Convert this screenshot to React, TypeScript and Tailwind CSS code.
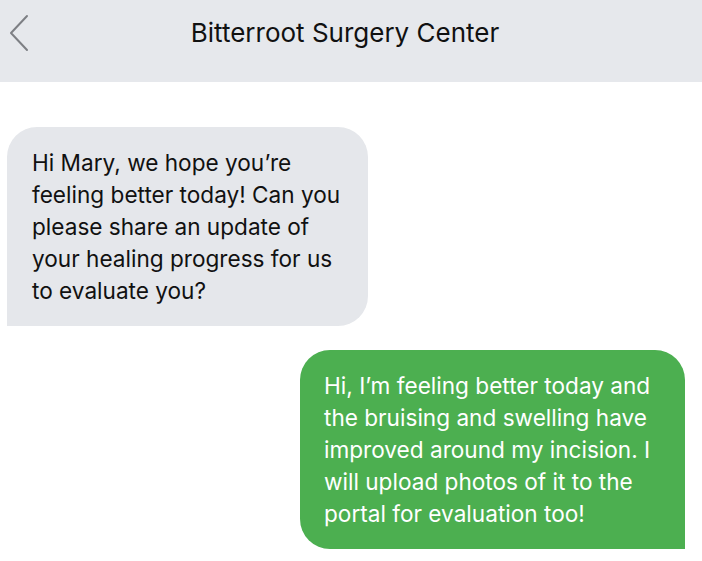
export default function App() {
  return (
    <div className="w-[702px] h-[561px] overflow-hidden bg-white font-['Inter',sans-serif]">
      {/* Header */}
      <header className="relative flex h-[82px] items-start justify-center bg-[#e6e8ec] pt-[15px]">
        <svg
          className="absolute left-[8px] top-[14px]"
          width="22"
          height="38"
          viewBox="0 0 22 38"
          fill="none"
        >
          <path d="M19 2 L3 19 L19 36" stroke="#7d7f84" strokeWidth="2" strokeLinecap="round" strokeLinejoin="round" />
        </svg>
        <h1 className="text-[26px] leading-[36px] text-[#111] -ml-[12px]">Bitterroot Surgery Center</h1>
      </header>

      {/* Messages */}
      <div className="flex flex-col pt-[45px]">
        <div className="ml-[7px] w-[361px] h-[199px] rounded-[30px] rounded-bl-none bg-[#e5e7eb] pl-[25px] pr-[10px] pt-[20px] text-[22.6px] leading-[32px] text-[#111]">
          Hi Mary, we hope you’re feeling better today! Can you please share an update of your healing progress for us to evaluate you?
        </div>

        <div className="ml-[300px] mt-[24px] w-[385px] h-[199px] rounded-[30px] rounded-br-none bg-[#4caf50] pl-[24px] pr-[10px] pt-[20px] text-[22.6px] leading-[32px] text-white">
          Hi, I’m feeling better today and the bruising and swelling have improved around my incision. I will upload photos of it to the portal for evaluation too!
        </div>
      </div>
    </div>
  );
}
